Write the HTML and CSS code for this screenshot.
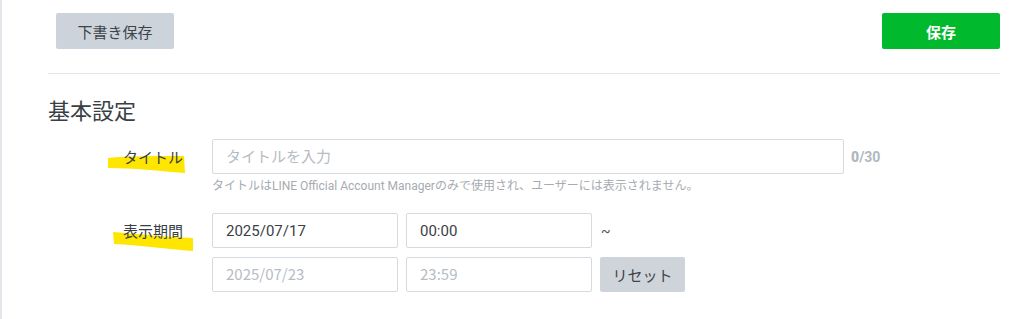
FILE: index.html
```html
<!DOCTYPE html>
<html lang="ja">
<head>
    <meta charset="UTF-8">
    <meta name="viewport" content="width=device-width, initial-scale=1.0">
    <title>基本設定</title>
    <link rel="stylesheet" href="styles.css">
</head>
<body>
    <div class="page">
        <div class="toolbar">
            <button class="btn btn-draft">下書き保存</button>
            <button class="btn btn-save">保存</button>
        </div>
        <hr class="divider">

        <h2 class="section-title">基本設定</h2>

        <div class="form-row">
            <div class="form-label">
                <svg class="marker marker-title" width="78" height="19" viewBox="0 0 78 19">
                    <path d="M0,3 C20,1 50,1 76,1 L77,18 C52,16 25,13 0,13 Z" fill="#ffe600"/>
                </svg>
                <span>タイトル</span>
            </div>
            <div class="form-field">
                <div class="title-line">
                    <input type="text" class="input input-title" placeholder="タイトルを入力">
                    <span class="counter"><b>0</b>/30</span>
                </div>
                <p class="help">タイトルはLINE Official Account Managerのみで使用され、ユーザーには表示されません。</p>
            </div>
        </div>

        <div class="form-row period-row">
            <div class="form-label">
                <svg class="marker marker-period" width="82" height="22" viewBox="0 0 82 22">
                    <path d="M0,1 C25,3 55,6 80,7 L80,20 C55,18 25,14 1,13 Z" fill="#ffe600"/>
                </svg>
                <span>表示期間</span>
            </div>
            <div class="form-field">
                <div class="period-grid">
                    <input type="text" class="input input-date" value="2025/07/17">
                    <input type="text" class="input input-date" value="00:00">
                    <span class="tilde">~</span>
                    <input type="text" class="input input-date" placeholder="2025/07/23">
                    <input type="text" class="input input-date" placeholder="23:59">
                    <button class="btn btn-reset">リセット</button>
                </div>
            </div>
        </div>
    </div>
</body>
</html>
```

FILE: styles.css
```css
body {
    margin: 0;
    padding: 0;
    font-family: Roboto, "Noto Sans CJK JP", sans-serif;
    color: #3a3f45;
    background-color: #fff;
}

.page {
    height: 100vh;
    box-sizing: border-box;
    border-left: 2px solid #e3e6ea;
    padding: 13px 24px 0 46px;
}

.toolbar {
    display: flex;
    justify-content: space-between;
    padding-left: 8px;
}

.btn {
    font-family: "Noto Sans CJK JP", sans-serif;
    border: none;
    border-radius: 2px;
    cursor: pointer;
    font-size: 15px;
    padding: 0;
}

.btn-draft {
    width: 118px;
    height: 36px;
    background-color: #ccd3da;
    color: #3d434a;
}

.btn-save {
    width: 118px;
    height: 36px;
    background-color: #00b92c;
    color: #fff;
    font-weight: bold;
}

.divider {
    border: none;
    border-top: 1px solid #e6e6e6;
    margin: 24px 0 0 0;
}

.section-title {
    font-family: "Noto Sans CJK JP", sans-serif;
    font-weight: normal;
    font-size: 22px;
    line-height: 32px;
    margin: 19px 0 0 0;
    color: #3a3f45;
}

.form-row {
    display: grid;
    grid-template-columns: 164px 1fr;
    margin-top: 14px;
}

.period-row {
    margin-top: 19px;
}

.form-label {
    position: relative;
    height: 35px;
    display: flex;
    align-items: center;
    justify-content: flex-end;
    padding-right: 29px;
    font-family: "Noto Sans CJK JP", sans-serif;
    font-size: 15px;
    color: #3a3f45;
}

.form-label span {
    position: relative;
}

.marker {
    position: absolute;
}

.marker-title {
    left: 60px;
    top: 16px;
}

.marker-period {
    left: 65px;
    top: 18px;
}

.title-line {
    display: flex;
    align-items: center;
    gap: 7px;
}

.input {
    box-sizing: border-box;
    height: 35px;
    border: 1px solid #d5dae0;
    border-radius: 2px;
    padding: 0 13px;
    font-family: Roboto, "Noto Sans CJK JP", sans-serif;
    font-size: 15px;
    color: #3a3f45;
    outline: none;
}

.input::placeholder {
    font-family: "Noto Sans CJK JP", sans-serif;
    color: #b6bcc3;
}

.input-title {
    width: 632px;
}

.counter {
    font-size: 14px;
    color: #b0b8c1;
    font-weight: bold;
}

.help {
    margin: 4px 0 0 0;
    font-size: 12px;
    line-height: 16px;
    color: #a6abb1;
}

.period-grid {
    display: grid;
    grid-template-columns: 186px 186px auto;
    column-gap: 8px;
    row-gap: 9px;
    align-items: center;
    justify-content: start;
}

.tilde {
    font-size: 14px;
    color: #555;
    padding-left: 1px;
}

.btn-reset {
    width: 85px;
    height: 35px;
    background-color: #cfd4da;
    color: #3d434a;
    font-size: 15px;
}
```
